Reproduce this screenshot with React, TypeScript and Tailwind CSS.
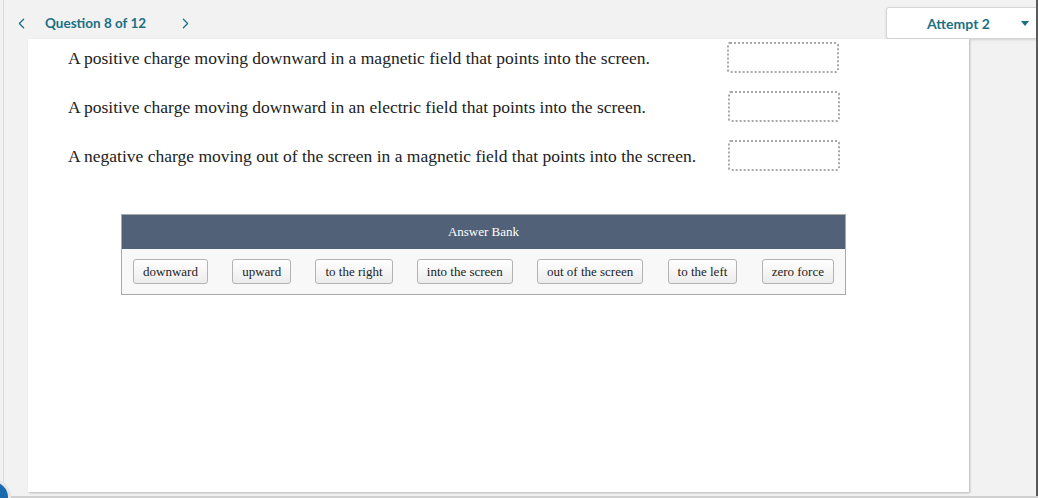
import { ChevronLeft, ChevronRight } from 'lucide-react';

const statements = [
  'A positive charge moving downward in a magnetic field that points into the screen.',
  'A positive charge moving downward in an electric field that points into the screen.',
  'A negative charge moving out of the screen in a magnetic field that points into the screen.',
];

const answers = [
  'downward',
  'upward',
  'to the right',
  'into the screen',
  'out of the screen',
  'to the left',
  'zero force',
];

export default function App() {
  return (
    <div className="relative h-[498px] w-[1038px] overflow-hidden bg-[#f2f2f2]">
      <div className="flex h-[496px] w-[1036px] flex-col border-l border-[#dcdcdc] ml-[3px]">
        {/* header */}
        <div className="flex h-[39px] items-center pr-[1px] font-['Lato',sans-serif] text-[#1c6f84]">
          <div className="flex h-full items-center pt-[8px]">
            <button className="ml-[5px] flex h-6 w-6 items-center justify-center">
              <ChevronLeft size={17} strokeWidth={1.75} />
            </button>
            <span className="ml-[12px] text-[13.5px] font-bold">Question 8 of 12</span>
            <button className="ml-[27px] flex h-6 w-6 items-center justify-center">
              <ChevronRight size={17} strokeWidth={1.75} />
            </button>
          </div>
          <div className="ml-auto mt-[7px] flex h-[32px] w-[152px] items-center rounded-[3px] border border-[#d6d6d6] bg-white shadow-sm">
            <span className="ml-[40px] text-[14px] font-bold">Attempt 2</span>
            <span className="ml-auto mr-[8px] h-0 w-0 border-x-[4px] border-t-[5px] border-x-transparent border-t-[#1c6f84]" />
          </div>
        </div>

        {/* card */}
        <div className="ml-[24px] h-[453px] w-[941px] bg-white shadow-[1px_1px_2px_rgba(0,0,0,0.25)] font-['Liberation_Serif',serif] text-[#222]">
          <div className="flex flex-col gap-[18px] pt-[3px]">
            {statements.map((s, i) => (
              <div key={i} className="flex items-center">
                <div className="w-[699px] pl-[40px] text-[17.5px] leading-5 whitespace-nowrap">{s}</div>
                <div className={`h-[31px] w-[112px] rounded-[3px] border-2 border-dotted border-[#a8a8a8] ${i === 0 ? 'ml-0' : 'ml-[1px]'}`} />
              </div>
            ))}
          </div>

          <div className="ml-[93px] mt-[43px] w-[725px] border border-[#a9a9a9]">
            <div className="flex h-[34px] items-center justify-center bg-[#506178] text-[13px] text-white">
              Answer Bank
            </div>
            <div className="flex items-center justify-between bg-[#f8f8f8] px-[11px] py-[10px]">
              {answers.map((a) => (
                <div
                  key={a}
                  className="flex h-[25px] items-center rounded-[3px] border border-[#b3b3b3] bg-gradient-to-b from-white to-[#ececec] px-[9px] text-[13px] text-[#222]"
                >
                  {a}
                </div>
              ))}
            </div>
          </div>
        </div>
      </div>

      {/* right edge and bottom edge */}
      <div className="absolute right-0 top-0 h-full w-[2px] bg-[#5a5a5a]" />
      <div className="absolute bottom-0 left-0 h-[2px] w-full bg-[#d0d0d0]" />

      {/* floating help bubble */}
      <div className="absolute left-[-25px] top-[479px] h-[36px] w-[36px] rounded-full border-[3px] border-[#e6e6e6] bg-[#1b6ab0]" />
    </div>
  );
}
